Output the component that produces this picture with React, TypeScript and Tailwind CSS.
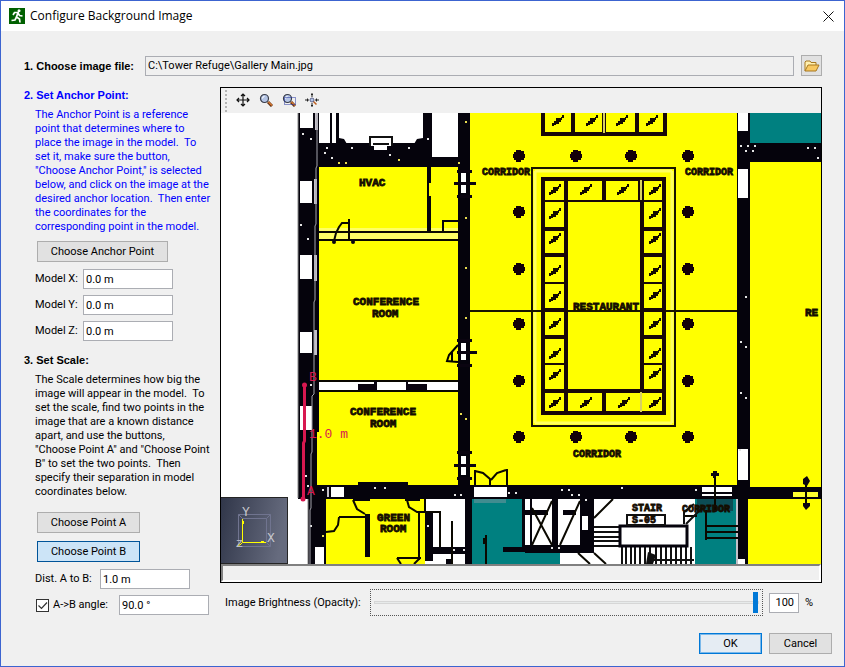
import { useState } from "react";
import type { ReactNode } from "react";

const anchorHelp = `The Anchor Point is a reference
point that determines where to
place the image in the model.  To
set it, make sure the button,
"Choose Anchor Point," is selected
below, and click on the image at the
desired anchor location.  Then enter
the coordinates for the
corresponding point in the model.`;

const scaleHelp = `The Scale determines how big the
image will appear in the model.  To
set the scale, find two points in the
image that are a known distance
apart, and use the buttons,
"Choose Point A" and "Choose Point
B" to set the two points.  Then
specify their separation in model
coordinates below.`;

const fieldClass =
  "h-5 w-[90px] border border-[#abadb3] bg-white px-0.5 text-black outline-none";

// [x, y, width, height]
type Box = [number, number, number, number];

const blackBoxes: Box[] = [
  [298, 113, 21, 386],
  [319, 143, 112, 24],
  [330, 113, 2, 30],
  [336, 113, 3, 30],
  [423, 113, 9, 54],
  [431, 157, 30, 10],
  [427, 166, 4, 66],
  [458, 113, 12, 386],
  [737, 113, 13, 386],
  [750, 143, 71, 19],
  [298, 485, 440, 14],
  [358, 482, 50, 4],
  [738, 487, 83, 12],
  [308, 499, 18, 65],
  [738, 499, 10, 65],
  [365, 514, 5, 43],
  [353, 498, 17, 3],
  [405, 498, 15, 3],
  [425, 512, 8, 49],
  [433, 547, 37, 7],
  [446, 559, 6, 5],
  [465, 498, 7, 66],
  [522, 499, 3, 50],
  [530, 499, 2, 50],
  [552, 499, 6, 50],
  [580, 499, 14, 54],
  [503, 547, 91, 5],
  [525, 545, 69, 8],
  [524, 510, 24, 5],
  [563, 510, 13, 5],
  [442, 220, 16, 2],
  [442, 220, 2, 12],
];

const whiteBoxes: Box[] = [
  [300, 113, 13, 15],
  [300, 181, 12, 22],
  [300, 255, 12, 24],
  [300, 332, 12, 21],
  [300, 406, 12, 24],
  [331, 487, 13, 10],
  [315, 547, 9, 17],
  [474, 487, 33, 10],
  [461, 173, 5, 9],
  [461, 185, 5, 8],
  [461, 343, 5, 8],
  [461, 353, 5, 7],
  [461, 456, 5, 8],
  [461, 467, 5, 8],
  [582, 516, 6, 14],
  [738, 113, 10, 18],
  [738, 169, 10, 29],
  [738, 449, 10, 31],
  [738, 559, 7, 5],
  [702, 487, 30, 5],
  [702, 494, 30, 2],
];

const greyStrips: Box[] = [
  [315, 113, 3, 17],
  [314, 179, 3, 25],
  [314, 255, 3, 26],
  [314, 330, 3, 25],
  [327, 487, 2, 10],
  [736, 499, 2, 65],
];

const specks = [
  [303, 134], [311, 139], [327, 148], [325, 153], [332, 158], [352, 148],
  [390, 155], [409, 148], [428, 139], [301, 225], [308, 239], [311, 385],
  [306, 476], [308, 486], [323, 490], [375, 488], [385, 488], [311, 526],
  [455, 495], [461, 495], [509, 493], [516, 493], [562, 490], [569, 490],
  [572, 495], [579, 495], [586, 500], [622, 488], [696, 490], [428, 526],
  [454, 550], [464, 550], [741, 146], [748, 146], [755, 146], [746, 151],
  [753, 151], [808, 148], [815, 148], [818, 158], [746, 297], [741, 342],
  [746, 347], [741, 393], [746, 398], [740, 450], [552, 548], [559, 548],
];

const yellowSpecks = [
  [339, 163], [346, 163], [399, 160], [459, 163], [466, 122], [466, 218],
  [466, 268], [466, 318], [461, 414], [466, 419], [323, 536],
];

const columnRows = [156, 212, 269, 324, 381, 437];

const tableMarks = [
  [558, 121], [592, 121], [622, 121], [652, 121],
  [555, 190], [586, 190], [623, 190], [655, 190],
  [555, 214], [555, 239], [555, 271], [555, 297], [555, 324], [555, 354], [555, 375],
  [655, 214], [655, 239], [655, 271], [655, 295], [655, 324], [655, 354], [655, 374],
  [555, 403], [586, 403], [624, 403], [655, 403],
];

const planLabels: { x: number; y: number; size: number; text: string }[] = [
  { x: 359, y: 186, size: 11, text: "HVAC" },
  { x: 353, y: 305, size: 11, text: "CONFERENCE" },
  { x: 372, y: 317, size: 11, text: "ROOM" },
  { x: 350, y: 415, size: 11, text: "CONFERENCE" },
  { x: 370, y: 427, size: 11, text: "ROOM" },
  { x: 377, y: 521, size: 11, text: "GREEN" },
  { x: 380, y: 532, size: 11, text: "ROOM" },
  { x: 482, y: 175, size: 10, text: "CORRIDOR" },
  { x: 685, y: 175, size: 10, text: "CORRIDOR" },
  { x: 573, y: 310, size: 11, text: "RESTAURANT" },
  { x: 573, y: 457, size: 10, text: "CORRIDOR" },
  { x: 632, y: 511, size: 10, text: "STAIR" },
  { x: 632, y: 523, size: 10, text: "S-05" },
  { x: 682, y: 512, size: 10, text: "CORRIDOR" },
  { x: 805, y: 316, size: 11, text: "RE" },
];

function Boxes({ items, fill }: { items: Box[]; fill: string }) {
  return (
    <g fill={fill}>
      {items.map(([x, y, w, h]) => (
        <rect key={`${x}-${y}-${w}`} x={x} y={y} width={w} height={h} />
      ))}
    </g>
  );
}

function FloorPlan() {
  return (
    <svg
      viewBox="221 113 600 451"
      preserveAspectRatio="xMinYMin slice"
      className="block min-h-0 w-full flex-1 bg-white"
      role="img"
      aria-label="Gallery floor plan"
    >
      {/* Rooms */}
      <g fill="#ffff00">
        <rect x="319" y="166" width="140" height="320" />
        <rect x="470" y="113" width="267" height="373" />
        <rect x="750" y="162" width="71" height="325" />
        <rect x="748" y="499" width="73" height="65" />
        <rect x="326" y="499" width="99" height="65" />
      </g>
      <g fill="#008080">
        <rect x="750" y="113" width="71" height="30" />
        <rect x="472" y="499" width="50" height="65" />
        <rect x="472" y="552" width="88" height="12" />
        <rect x="695" y="496" width="41" height="68" />
      </g>
      <rect x="697" y="497" width="36" height="14" fill="#0c4c54" />
      <rect x="474" y="499" width="32" height="4" fill="#408c90" />
      <rect x="319" y="382" width="139" height="8" fill="#fff" />
      <rect x="319" y="228" width="139" height="12" fill="#ffff66" />
      <path d="M535 171H672M535 423H672M535 171V423M672 171V423" stroke="#ffff60" strokeWidth="3" />

      <Boxes items={blackBoxes} fill="#05030c" />
      <rect x="317" y="432" width="3" height="53" fill="#ffff00" />
      <Boxes items={greyStrips} fill="#c4c0c8" />
      <Boxes items={whiteBoxes} fill="#fff" />
      <Boxes items={specks.map(([x, y]): Box => [x - 1, y - 1, 2, 2])} fill="#e4e4e4" />
      <Boxes items={yellowSpecks.map(([x, y]): Box => [x - 1, y - 1, 2, 2])} fill="#e8dc50" />
      <rect x="793" y="492" width="25" height="5" fill="#ffff30" />
      <path d="M298 113V498M308 499V564" stroke="#888" strokeWidth="1" fill="none" />
      <path d="M339 138l5 1 3 5h-8zM423 138l-6 1-3 5h9z" fill="#05030c" />
      <path d="M370 146V137H392V146" stroke="#111" strokeWidth="2" fill="#fff" />
      <rect x="374" y="145" width="13" height="5" fill="#fff" />
      <rect x="373" y="143" width="16" height="2" fill="#111" />
      <rect x="429" y="183" width="3" height="13" fill="#ffff00" />

      {/* Partitions and doors */}
      <g stroke="#0a0800" strokeWidth="2" fill="none">
        <path d="M319 232H458M319 240H458M319 381H458M319 391H458" />
        <path d="M334 241L336 233L339 227L342 223H349M349 219V240" />
        <path d="M339 517H365M339 517L338 525L334 531L326 532M353 500L357 509L365 514" />
        <path d="M407 500L409 507L417 512H440V547M419 512V560M425 499V512M452 521V564M397 558H421M397 558L401 564M414 564L420 558" />
        <path d="M475 485V470M507 485V469M475 471L483 473L490 479V485M506 470L497 473L491 480" />
        <path d="M532 508L552 545M552 501L532 545M560 545L580 501M594 518L613 499M578 553L590 564M594 553L606 564" />
        <path d="M486 535V564M484 538V544" />
        <path d="M715 472V510M806 478V508" />
        <path d="M705 526H738M705 532H738M705 538H738M706 510V540M683 516H697M687 546V526" />
      </g>
      <g fill="#0a0410">
        <rect x="358" y="384" width="18" height="6" />
        <rect x="374" y="381" width="3" height="9" />
        <rect x="406" y="381" width="2" height="9" />
        <rect x="406" y="384" width="21" height="6" />
        <circle cx="334" cy="242" r="2" />
        <circle cx="353" cy="242" r="2" />
        <path d="M713 471h4v2h2v3h-3v2h-3v-2h-2v-3h2z" />
        <path d="M803 479l4-3 3 5-3 5-4-2zM803 503h7v3l-4 4-3-4z" />
        <path d="M454 182h22v3h-22zM457 170h15v3h-15zM457 195h15v3h-15z" />
        <path d="M457 351h20v3h-20zM457 339h15v3h-15zM457 364h15v3h-15z" />
        <path d="M454 464h22v3h-22zM457 451h15v3h-15zM457 477h15v3h-15z" />
      </g>
      <path d="M458 345L449 355L447 361L458 362M452 352v9" stroke="#000" strokeWidth="2" fill="none" />

      {/* Stair flights */}
      <path d="M594 527H620M594 532H620M594 537H620M594 541H620M594 546H620" stroke="#111" strokeWidth="2" />
      <path
        d="M622 547V564M626 547V564M631 547V564M635 547V564M640 547V564M645 547V564M650 547V564M656 547V564M661 547V564M666 547V564M671 547V564M676 547V564M681 547V564M686 547V564M691 547V564M650 560H694"
        stroke="#111"
        strokeWidth="2"
      />
      <rect x="620" y="526" width="67" height="20" fill="#fff" stroke="#05030c" strokeWidth="3" />
      <rect x="627" y="515" width="38" height="10" fill="#fff" stroke="#111" strokeWidth="2" />
      <path d="M684 524V512L694 504M686 524L702 508" stroke="#111" strokeWidth="2" fill="none" />
      <path d="M648 552l8 3-3 9h-7z" fill="#111" />

      {/* Restaurant seating */}
      <path d="M532 426V168H675V426ZM470 311H737" stroke="#181400" strokeWidth="2" fill="none" />
      <g stroke="#180808" strokeWidth="4" fill="none">
        <path d="M543 179H664V413H543ZM566 179V413M642 201V391" />
        <path d="M543 229H566M543 255H566M543 310H566M543 337H566M543 391H664" />
        <path d="M642 229H664M642 255H664M642 310H664M642 337H664M604 179V201M604 391V413" />
        <path d="M543 113V134H665V113M573 113V134M604 113V134M637 113V134" />
      </g>
      <path
        d="M543 201H664M543 283H566M543 364H566M642 283H664M642 364H664M639 180V200M643 180V200"
        stroke="#180808"
        strokeWidth="2"
      />
      <path d="M604 113V133M641 180V200M641 392V412" stroke="#d8d060" strokeWidth="2" />
      {tableMarks.map(([x, y]) => (
        <path
          key={`${x}-${y}`}
          transform={`translate(${x} ${y})`}
          d="M-6 5v-3h2v-2h2v-3h5v-1h1v-2h2v3h-2v2h-1v2h-2v2h-3v1h-2v1z"
          fill="#120a00"
        />
      ))}
      {columnRows.map((y, row) =>
        (row === 0 || row === 5 ? [519, 576, 631, 688] : [519, 688]).map((x) => (
          <path
            key={`${x}-${y}`}
            transform={`translate(${x} ${y})`}
            d="M-3 -6h5v1h3v3h1v4h-1v2h-3v2h-5v-2h-2v-2h-1v-4h1v-2h2z"
            fill="#120008"
          />
        ))
      )}

      {planLabels.map((label) => (
        <text
          key={`${label.x}-${label.y}`}
          x={label.x}
          y={label.y}
          fontSize={label.size}
          stroke="#140c00"
          strokeWidth="0.8"
          fill="#140c00"
          className="font-['Liberation_Mono',monospace] font-bold"
        >
          {label.text}
        </text>
      ))}

      <path
        d="M317 113V166L316 168V224L315 226V300L314 302V394L312 396V452L311 454V508L310 510V564"
        stroke="#a4a4ac"
        fill="none"
      />

      {/* Measured scale line */}
      <path d="M304.5 385V441L303.5 443V499" stroke="#d81850" strokeWidth="3" fill="none" />
      <circle cx="304.5" cy="385" r="2.5" fill="#d81850" />
      <circle cx="303" cy="499" r="2.5" fill="#d81850" />
      <g fill="#d81850" fontSize="13" className="font-['Liberation_Mono',monospace]">
        <text x="309" y="381">B</text>
        <text x="309" y="438">1.0 m</text>
        <text x="307" y="495">A</text>
      </g>

      {/* Axis gizmo */}
      <defs>
        <linearGradient id="axis" x1="0" y1="0" x2="1" y2="0.2">
          <stop offset="0" stopColor="#303649" />
          <stop offset="1" stopColor="#666b7e" />
        </linearGradient>
      </defs>
      <rect x="220.5" y="497.5" width="67" height="66" fill="url(#axis)" stroke="#252525" />
      <path
        d="M238.5 514.5H270.5V546.5H238.5ZM242.5 518.5H266.5V542.5H242.5ZM238.5 514.5l4 4M270.5 514.5l-4 4M270.5 546.5l-4-4"
        stroke="#70748f"
        fill="none"
      />
      <path d="M242.5 519V542.5H266M243.5 521v3M261 541.5h3M242 543l-2 2h-2" stroke="#ffff00" fill="none" />
      <g fill="#c8c8cc" fontSize="13" className="font-['Liberation_Mono',monospace]">
        <text x="242" y="516">Y</text>
        <text x="267" y="542">X</text>
        <text x="236" y="547" fontSize="11">Z</text>
      </g>
    </svg>
  );
}

function Magnifier() {
  return (
    <>
      <path d="M9 9l4 4" stroke="#5c2c10" strokeWidth="3" />
      <path d="M9.500 9l3.500 3.500" stroke="#d87830" strokeWidth="1.500" />
      <circle cx="5.500" cy="5.500" r="4" fill="#b4c4e4" stroke="#383c48" strokeWidth="1.200" />
      <path d="M3.500 5.500a2 2 0 0 1 2-2" stroke="#fff" fill="none" />
    </>
  );
}

function ToolButton({ label, children }: { label: string; children: ReactNode }) {
  return (
    <button type="button" aria-label={label} className="flex size-[23px] items-center justify-center">
      <svg viewBox="0 0 14 14" className="size-3.5">
        {children}
      </svg>
    </button>
  );
}

function Toolbar() {
  return (
    <div className="flex h-[25px] shrink-0 items-start bg-[#f0f0f0]">
      <svg viewBox="0 0 10 24" className="h-6 w-2.5" aria-hidden="true">
        <path d="M5 2V24" stroke="#b4b4b4" strokeWidth="2" strokeDasharray="2 2" />
      </svg>
      <ToolButton label="Pan">
        <path
          d="M7 1v12M1 7h12M5 3l2-2 2 2M5 11l2 2 2-2M3 5L1 7l2 2M11 5l2 2-2 2"
          stroke="#111"
          strokeWidth="1.200"
          fill="none"
        />
      </ToolButton>
      <ToolButton label="Zoom">
        <Magnifier />
      </ToolButton>
      <ToolButton label="Zoom to box">
        <Magnifier />
        <path d="M2.500 4.500h11v7h-11z" stroke="#2030a0" strokeDasharray="1 1" fill="none" />
      </ToolButton>
      <ToolButton label="Reset view">
        <path d="M7 0v4M7 10v4M0 7h4M10 7h4M6 1.500h2M6 12.500h2M2.500 5.500v3M11.500 5.500v3" stroke="#222" />
        <path d="M8 8l3.500 3.500" stroke="#c06020" strokeWidth="1.500" />
        <circle cx="7" cy="7" r="2" fill="#b4c4e4" stroke="#484c78" strokeWidth="0.800" />
      </ToolButton>
    </div>
  );
}

function CoordField({ label, id }: { label: string; id: string }) {
  return (
    <div className="flex items-center">
      <label htmlFor={id} className="w-12">
        {label}
      </label>
      <input id={id} defaultValue="0.0 m" className={fieldClass} />
    </div>
  );
}

export default function App() {
  const [opacity, setOpacity] = useState(100);
  const [useAngle, setUseAngle] = useState(true);

  return (
    <div className="flex min-h-screen flex-col border border-[#3c64d0] bg-[#f0f0f0] font-['Roboto',sans-serif] text-[11px] leading-[14px] text-black">
      {/* Title bar */}
      <header className="flex h-[30px] shrink-0 items-center bg-white pr-2.5 pl-2">
        <svg viewBox="0 0 16 16" className="size-4" aria-hidden="true">
          <path d="M0 0h16v16H0z" fill="#006000" />
          <circle cx="10" cy="2.800" r="1.500" fill="#fff" />
          <path
            d="M4 7l1.500-2.500L9 4.500 7.500 9l3 2 .5 3.500M9 5l1.500 2.500 3 .5M7.500 9L6 12l-3.500.5"
            stroke="#fff"
            strokeWidth="1.700"
            fill="none"
          />
        </svg>
        <h1 className="ml-[5px] flex-1 font-['Open_Sans',sans-serif] text-xs">Configure Background Image</h1>
        <button type="button" aria-label="Close">
          <svg viewBox="0 0 11 11" className="size-[11px]">
            <path d="M.5.5l10 10M10.500.5l-10 10" stroke="#111" />
          </svg>
        </button>
      </header>

      <main className="flex flex-1 flex-col pt-6 pr-[22px] pb-3 pl-[23px]">
        <div className="flex items-center">
          <label htmlFor="file" className="w-[121px] font-['Liberation_Sans',sans-serif] font-bold">
            1. Choose image file:
          </label>
          <input
            id="file"
            readOnly
            defaultValue="C:\Tower Refuge\Gallery Main.jpg"
            className="h-5 min-w-0 flex-1 border border-[#abadb3] px-0.5 outline-none"
          />
          <button
            type="button"
            aria-label="Browse"
            className="ml-[7px] flex size-[21px] items-center justify-center border border-[#adadad] bg-[#e1e1e1]"
          >
            <svg viewBox="0 0 16 14" className="h-3.5 w-4">
              <path d="M1 12V3l1-1h4l1 1.500h5V6" fill="#fff0b0" stroke="#a87820" />
              <path d="M1 12l3-6h11l-3 6z" fill="#f8c860" stroke="#a87820" />
            </svg>
          </button>
        </div>

        <div className="mt-[11px] flex flex-1">
          {/* Steps */}
          <div className="w-[196px] shrink-0">
            <h2 className="mt-px font-['Liberation_Sans',sans-serif] font-bold text-[#0000ff]">
              2. Set Anchor Point:
            </h2>
            <div className="pl-[11px]">
              <p className="mt-1.5 whitespace-pre text-[#0000ff]">{anchorHelp}</p>
              <button
                type="button"
                className="mt-[7px] ml-0.5 h-[21px] w-[131px] border border-[#adadad] bg-[#e1e1e1]"
              >
                Choose Anchor Point
              </button>
              <div className="mt-[7px] flex flex-col gap-1.5">
                <CoordField id="model-x" label="Model X:" />
                <CoordField id="model-y" label="Model Y:" />
                <CoordField id="model-z" label="Model Z:" />
              </div>
            </div>
            <h2 className="mt-3 font-['Liberation_Sans',sans-serif] font-bold">3. Set Scale:</h2>
            <div className="pl-[11px]">
              <p className="mt-1.5 whitespace-pre">{scaleHelp}</p>
              <div className="mt-[13px] ml-0.5 flex flex-col items-start gap-2">
                <button type="button" className="h-[21px] w-[103px] border border-[#adadad] bg-[#e1e1e1]">
                  Choose Point A
                </button>
                <button
                  type="button"
                  aria-pressed="true"
                  className="h-[21px] w-[103px] border border-[#005499] bg-[#cce4f7]"
                >
                  Choose Point B
                </button>
              </div>
              <div className="mt-[7px] flex items-center">
                <label htmlFor="distance" className="w-[65px]">
                  Dist. A to B:
                </label>
                <input id="distance" defaultValue="1.0 m" className={fieldClass} />
              </div>
              <div className="mt-1.5 flex items-center">
                <label className="flex w-[84px] items-center gap-1 whitespace-nowrap">
                  <span className="relative flex">
                    <input
                      type="checkbox"
                      checked={useAngle}
                      onChange={(e) => setUseAngle(e.target.checked)}
                      className="ml-px size-[13px] appearance-none border border-[#333] bg-white"
                    />
                    {useAngle && (
                      <svg viewBox="0 0 13 13" className="pointer-events-none absolute top-0 left-px size-[13px]">
                        <path d="M2.500 6.500l3 3 5.500-6" stroke="#333" strokeWidth="1.200" fill="none" />
                      </svg>
                    )}
                  </span>
                  A-&gt;B angle:
                </label>
                <input aria-label="A to B angle" defaultValue="90.0 °" className={fieldClass} />
              </div>
            </div>
          </div>

          {/* Image view */}
          <div className="flex min-w-0 flex-1 flex-col">
            <div className="flex flex-1 flex-col border border-black bg-[#f0f0f0]">
              <Toolbar />
              <FloorPlan />
              <div className="h-[18px] shrink-0 border-t-2 border-r-2 border-b-2 border-l-2 border-t-[#808080] border-r-white border-b-white border-l-[#808080]" />
            </div>
            <div className="mt-1.5 flex items-center pl-[5px]">
              <label htmlFor="opacity" className="w-[145px] whitespace-nowrap">
                Image Brightness (Opacity):
              </label>
              <div className="flex h-[27px] min-w-0 flex-1 items-center border border-dotted border-[#555] px-[3px]">
                <input
                  id="opacity"
                  type="range"
                  min={0}
                  max={100}
                  value={opacity}
                  onChange={(e) => setOpacity(Number(e.target.value))}
                  className="h-[21px] w-full appearance-none bg-transparent outline-none [&::-webkit-slider-runnable-track]:h-[3px] [&::-webkit-slider-runnable-track]:border [&::-webkit-slider-runnable-track]:border-[#d6d6d6] [&::-webkit-slider-runnable-track]:bg-[#e7eaea] [&::-webkit-slider-thumb]:-mt-[10px] [&::-webkit-slider-thumb]:h-[21px] [&::-webkit-slider-thumb]:w-[5px] [&::-webkit-slider-thumb]:appearance-none [&::-webkit-slider-thumb]:bg-[#0078d7]"
                />
              </div>
              <input
                aria-label="Opacity percent"
                value={opacity}
                onChange={(e) => setOpacity(Number(e.target.value) || 0)}
                className="ml-1.5 h-5 w-[30px] border border-[#abadb3] bg-white px-1 text-right outline-none"
              />
              <span className="ml-1.5 w-[17px]">%</span>
            </div>
          </div>
        </div>

        <footer className="-mr-2.5 mt-[17px] flex justify-end gap-[7px]">
          <button
            type="button"
            className="h-[21px] w-[63px] border border-[#0078d7] bg-[#e5ecf3] ring-1 ring-[#7ab8ea] ring-inset"
          >
            OK
          </button>
          <button type="button" className="h-[21px] w-[63px] border border-[#adadad] bg-[#e1e1e1]">
            Cancel
          </button>
        </footer>
      </main>
    </div>
  );
}
